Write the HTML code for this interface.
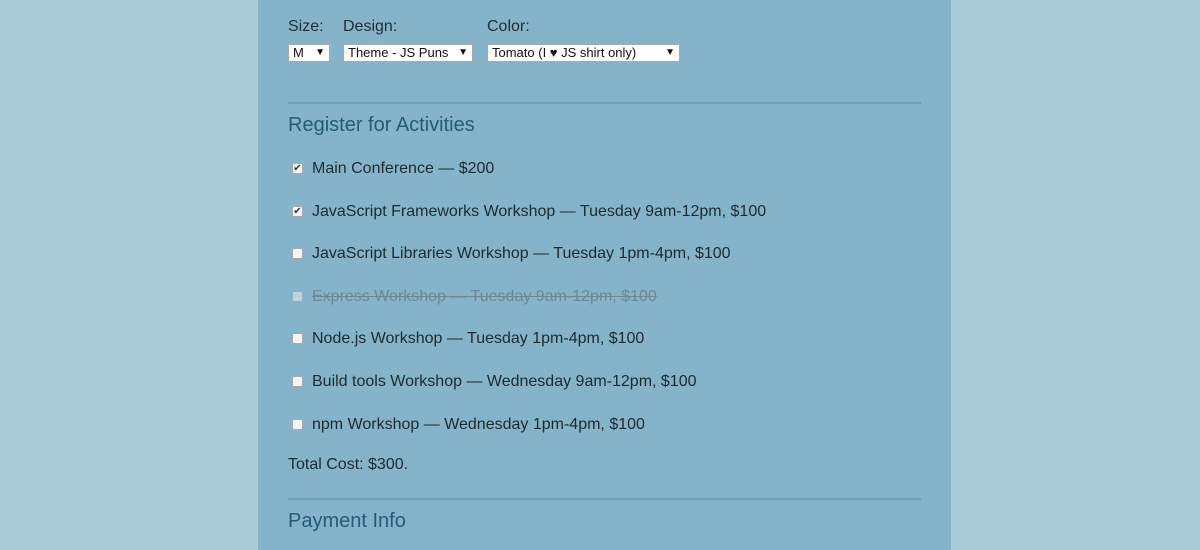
<!DOCTYPE html>
<html><head><style>
body{margin:0;width:1200px;height:550px;background:#a9cbd8;font-family:"Liberation Sans",sans-serif;overflow:hidden;position:relative}
.p{position:absolute;left:258px;top:0;width:693px;height:550px;background:#85b4ca}
.a{position:absolute;white-space:nowrap}
.lbl{font-size:16px;color:#1f2d33}
.sel{position:absolute;top:44px;height:18px;background:#fff;border:1px solid #a9a9a9;box-sizing:border-box;font-size:13px;color:#111;line-height:16px;padding-left:4px}
.sel span{position:absolute;right:4px;font-size:10px}
.hr{position:absolute;left:288px;width:633px;height:2px;background:#6aa2bb}
h2{position:absolute;left:288px;margin:0;font-size:20px;font-weight:normal;color:#245b75}
.cb{position:absolute;left:292px;width:11px;height:11px;background:#f4f4f4;border:1px solid #aaa;box-sizing:border-box;border-radius:2px;font-size:10px;line-height:9px;text-align:center;color:#333}
.it{position:absolute;left:312px;font-size:16px;color:#1c2a30;white-space:nowrap}
</style></head><body>
<div class="p"></div>
<div class="a lbl" style="left:288px;top:18px">Size:</div>
<div class="a lbl" style="left:343px;top:18px">Design:</div>
<div class="a lbl" style="left:487px;top:18px">Color:</div>
<div class="sel" style="left:288px;width:42px">M<span>▼</span></div>
<div class="sel" style="left:343px;width:130px">Theme - JS Puns<span>▼</span></div>
<div class="sel" style="left:487px;width:193px">Tomato (I ♥ JS shirt only)<span>▼</span></div>
<div class="hr" style="top:102px"></div>
<h2 style="top:114px">Register for Activities</h2>
<div class="cb" style="top:163px">✔</div><div class="it" style="top:160px">Main Conference — $200</div>
<div class="cb" style="top:206px">✔</div><div class="it" style="top:203px">JavaScript Frameworks Workshop — Tuesday 9am-12pm, $100</div>
<div class="cb" style="top:248px"></div><div class="it" style="top:245px">JavaScript Libraries Workshop — Tuesday 1pm-4pm, $100</div>
<div class="cb" style="top:291px;opacity:.5"></div><div class="it" style="top:288px;color:#6d8895;text-decoration:line-through">Express Workshop — Tuesday 9am-12pm, $100</div>
<div class="cb" style="top:333px"></div><div class="it" style="top:330px">Node.js Workshop — Tuesday 1pm-4pm, $100</div>
<div class="cb" style="top:376px"></div><div class="it" style="top:373px">Build tools Workshop — Wednesday 9am-12pm, $100</div>
<div class="cb" style="top:419px"></div><div class="it" style="top:416px">npm Workshop — Wednesday 1pm-4pm, $100</div>
<div class="it" style="left:288px;top:456px">Total Cost: $300.</div>
<div class="hr" style="top:498px"></div>
<h2 style="top:510px">Payment Info</h2>
</body></html>
